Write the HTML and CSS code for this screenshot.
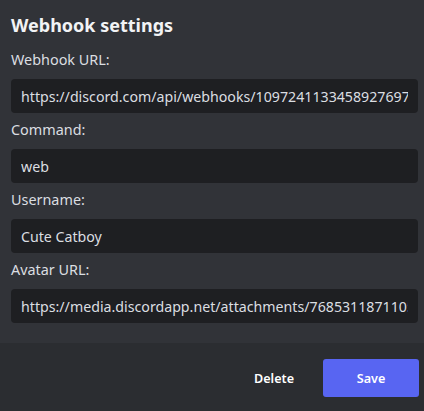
FILE: index.html
```html
<!DOCTYPE html>
<html>
<head>
<meta charset="utf-8">
<link rel="stylesheet" href="styles.css">
</head>
<body>
<div class="modal">
  <div class="modal-body">
    <h2 class="title">Webhook settings</h2>
    <div class="field">
      <label class="label">Webhook URL:</label>
      <input class="input" type="text" value="https://discord.com/api/webhooks/1097241133458927697/aXbQ2kLmN8pRsT">
    </div>
    <div class="field">
      <label class="label">Command:</label>
      <input class="input" type="text" value="web">
    </div>
    <div class="field">
      <label class="label">Username:</label>
      <input class="input" type="text" value="Cute Catboy">
    </div>
    <div class="field">
      <label class="label">Avatar URL:</label>
      <input class="input" type="text" value="https://media.discordapp.net/attachments/768531187110543/avatar.png">
    </div>
  </div>
  <div class="modal-footer">
    <button class="btn btn-link">Delete</button>
    <button class="btn btn-primary">Save</button>
  </div>
</div>
</body>
</html>
```
FILE: styles.css
```css
* { box-sizing: border-box; }
html, body {
  margin: 0;
  padding: 0;
  background: #2b2d31;
  font-family: "Noto Sans", "Open Sans", sans-serif;
}
.modal {
  width: 424px;
  height: 411px;
  display: flex;
  flex-direction: column;
}
.modal-body {
  background: #313338;
  padding: 13px 6px 12px 11px;
  display: flex;
  flex-direction: column;
}
.title {
  margin: 0 0 14px 0;
  font-size: 18px;
  line-height: 24px;
  font-weight: 700;
  color: #f2f3f5;
}
.field {
  display: flex;
  flex-direction: column;
  margin-bottom: 8px;
}
.label {
  font-size: 14.4px;
  line-height: 18px;
  color: #dbdee1;
  margin-bottom: 10px;
}
.input {
  display: block;
  width: 100%;
  height: 34px;
  border: none;
  outline: none;
  border-radius: 4px;
  background: #1e1f22;
  color: #dbdee1;
  font-family: "Noto Sans", "Open Sans", sans-serif;
  font-size: 14.2px;
  line-height: 18px;
  padding: 0 10px;
  margin: 0;
}
.modal-footer {
  flex: 1;
  background: #2b2d31;
  display: flex;
  justify-content: flex-end;
  align-items: flex-start;
  padding: 16px 5px 0 0;
}
.btn {
  height: 38px;
  border: none;
  border-radius: 3px;
  font-family: "Noto Sans", "Open Sans", sans-serif;
  font-size: 12.6px;
  font-weight: 600;
  cursor: pointer;
}
.btn-link {
  background: transparent;
  color: #ffffff;
  padding: 0 16px;
  margin-right: 13px;
}
.btn-primary {
  width: 96px;
  background: #5865f2;
  color: #ffffff;
}
```
